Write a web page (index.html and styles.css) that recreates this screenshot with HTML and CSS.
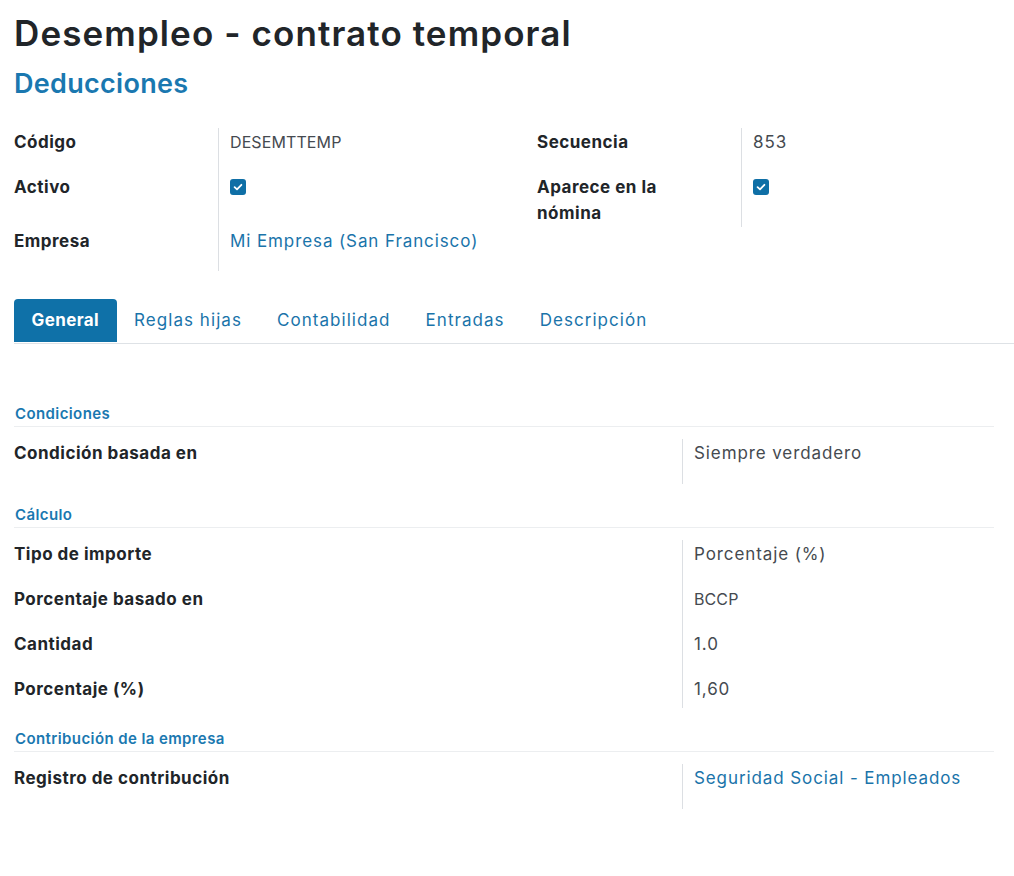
FILE: index.html
```html
<!DOCTYPE html>
<html lang="es">
<head>
<meta charset="utf-8">
<title>Desempleo - contrato temporal</title>
<link rel="stylesheet" href="styles.css">
</head>
<body>
<div class="sheet">
  <h1 class="title">Desempleo - contrato temporal</h1>
  <h2 class="subtitle">Deducciones</h2>

  <div class="top-grid">
    <div class="lbl">Código</div>
    <div class="val sep caps">DESEMTTEMP</div>
    <div class="lbl">Secuencia</div>
    <div class="val sep">853</div>

    <div class="lbl">Activo</div>
    <div class="val sep"><span class="check"><svg viewBox="0 0 16 16" width="16" height="16"><path d="M4.6 8.2 L7 10.4 L11.4 5.8" fill="none" stroke="#fff" stroke-width="1.8" stroke-linecap="round" stroke-linejoin="round"/></svg></span></div>
    <div class="lbl">Aparece en la<br>nómina</div>
    <div class="val sep"><span class="check"><svg viewBox="0 0 16 16" width="16" height="16"><path d="M4.6 8.2 L7 10.4 L11.4 5.8" fill="none" stroke="#fff" stroke-width="1.8" stroke-linecap="round" stroke-linejoin="round"/></svg></span></div>

    <div class="lbl">Empresa</div>
    <div class="val sep"><a class="link">Mi Empresa (San Francisco)</a></div>
    <div class="lbl"></div>
    <div class="val"></div>
  </div>

  <div class="tabs">
    <div class="tab active">General</div>
    <div class="tab">Reglas hijas</div>
    <div class="tab">Contabilidad</div>
    <div class="tab">Entradas</div>
    <div class="tab">Descripción</div>
  </div>

  <div class="pane">
    <div class="section">
      <div class="sec-title">Condiciones</div>
      <div class="rows">
        <div class="lbl">Condición basada en</div>
        <div class="val sep">Siempre verdadero</div>
      </div>
    </div>

    <div class="section">
      <div class="sec-title">Cálculo</div>
      <div class="rows multi">
        <div class="lbl">Tipo de importe</div>
        <div class="val sep">Porcentaje (%)</div>
        <div class="lbl">Porcentaje basado en</div>
        <div class="val sep caps">BCCP</div>
        <div class="lbl">Cantidad</div>
        <div class="val sep">1.0</div>
        <div class="lbl">Porcentaje (%)</div>
        <div class="val sep">1,60</div>
      </div>
    </div>

    <div class="section">
      <div class="sec-title">Contribución de la empresa</div>
      <div class="rows">
        <div class="lbl">Registro de contribución</div>
        <div class="val sep"><a class="link">Seguridad Social - Empleados</a></div>
      </div>
    </div>
  </div>
</div>
</body>
</html>
```

FILE: styles.css
```css
* { box-sizing: border-box; }
html, body { margin: 0; padding: 0; background: #fff; }
body {
  font-family: Inter, "Noto Sans", "Liberation Sans", sans-serif;
  color: #212529;
  font-size: 17px;
}
.sheet { padding: 0 0 0 14px; }

.title {
  margin: 0;
  padding-top: 12px;
  font-size: 35px;
  line-height: 42px;
  font-weight: 600;
  color: #212529;
  letter-spacing: 1.1px;
}
.subtitle {
  margin: 13px 0 0 0;
  font-size: 27px;
  line-height: 34px;
  font-weight: 600;
  color: #1a78b0;
  letter-spacing: 0.3px;
}

.top-grid {
  margin-top: 27px;
  display: grid;
  grid-template-columns: 204px 319px 204px 1fr;
  grid-template-rows: 45px 54px 44px;
}
.lbl {
  font-weight: 700;
  line-height: 26px;
  padding-top: 1px;
  color: #212529;
  letter-spacing: 0.5px;
}
.val {
  line-height: 26px;
  padding-top: 1px;
  padding-left: 11px;
  color: #454a50;
  letter-spacing: 0.9px;
}
.val.caps { font-size: 16px; letter-spacing: 0.1px; }
.sep { border-left: 1px solid #dcdfe3; }
.link { color: #1a74aa; text-decoration: none; }

.check {
  display: inline-flex;
  width: 16px;
  height: 16px;
  border-radius: 3px;
  background: #0f6fa6;
  margin-top: 5px;
  vertical-align: top;
}
.check svg { display: block; }

.tabs {
  margin-top: 28px;
  display: flex;
  border-bottom: 1px solid #dee2e6;
  height: 45px;
  align-items: stretch;
}
.tab {
  padding: 0 17.5px;
  line-height: 43px;
  color: #1a74aa;
  letter-spacing: 1.05px;
}
.tab.active {
  background: #0f71a8;
  color: #fff;
  font-weight: 700;
  letter-spacing: 0.4px;
  border-radius: 4px 4px 0 0;
  height: 43px;
}

.pane { padding-top: 60px; padding-right: 20px; }
.section { margin-bottom: 21px; }
.sec-title {
  font-size: 15px;
  font-weight: 600;
  color: #1a78b0;
  line-height: 20px;
  padding: 0 1px 2px;
  letter-spacing: 0.4px;
  border-bottom: 1px solid #eceef0;
}
.rows {
  margin-top: 12px;
  display: grid;
  grid-template-columns: 668px 1fr;
  grid-auto-rows: 45px;
}
.rows.multi { grid-template-rows: 45px 45px 45px 33px; }
```
